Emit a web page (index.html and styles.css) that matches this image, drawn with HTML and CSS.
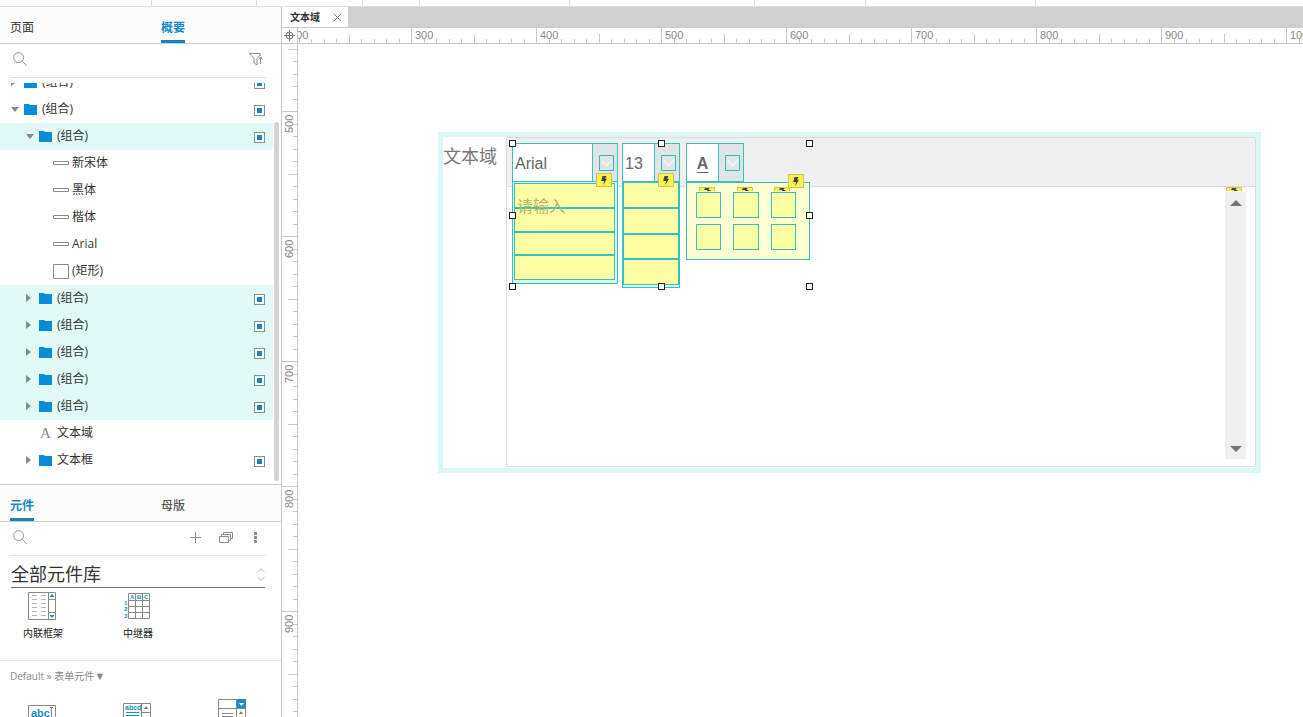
FILE: index.html
```html
<!DOCTYPE html>
<html lang="zh">
<head>
<meta charset="utf-8">
<title>文本域</title>
<link rel="stylesheet" href="styles.css">
</head>
<body>
<svg class="defs" aria-hidden="true">
  <symbol id="search" viewBox="0 0 16 16"><circle cx="6" cy="6" r="5.3"/><path d="M10 10l5 5"/></symbol>
  <symbol id="folder" viewBox="0 0 13 12"><path d="M0 1h5l1 1h7v10H0z"/></symbol>
  <symbol id="bar" viewBox="0 0 16 4"><path d="M.5.5h15v3H.5z"/></symbol>
  <symbol id="bolt" viewBox="0 0 16 14" preserveAspectRatio="xMidYMin slice"><path class="plate" d="M.5.5h15v13H.5z"/><path class="flash" d="M6.5 3h4L9.2 5.8H11L7.2 12 8 8H5.2z"/></symbol>
  <symbol id="boltcut" viewBox="0 0 16 4"><path class="plate" d="M.5.5h15v4H.5z"/><path class="flash" d="M6 1h4.500L9.500 3H12l-1 1H8V3H5z"/></symbol>
  <symbol id="chevron" viewBox="0 0 15 16"><path class="frame" d="M.5.5h14v15H.5z"/><path class="mark" d="M2.500 5.500l5 5 5-5"/></symbol>
</svg>
<div class="toolbar"><i></i><i></i><i></i><i></i><i></i><i></i><i></i><i></i></div>
<div class="workspace">
  <aside class="sidebar">
    <section class="outline">
      <nav class="tabs"><button>页面</button><button class="active">概要</button></nav>
      <div class="search">
        <svg class="line magnifier"><use href="#search"/></svg>
        <input type="text" aria-label="搜索概要">
        <button class="tool" aria-label="筛选"><svg class="line" width="14" height="13"><path d="M11 3V.5H.5L5 5.500V10l3 2V5.500L11 2M11.500 11V4M9.500 6.500l2-2.500 2 2.500"/></svg></button>
      </div>
      <div class="tree">
        <ul>
          <li class="l1"><span class="arrow"></span><svg class="folder"><use href="#folder"/></svg><label for="g0">(组合)</label><input type="checkbox" id="g0" checked></li>
          <li class="l1"><span class="arrow open"></span><svg class="folder"><use href="#folder"/></svg><label for="g1">(组合)</label><input type="checkbox" id="g1" checked></li>
          <li class="l2 picked"><span class="arrow open"></span><svg class="folder"><use href="#folder"/></svg><label for="g2">(组合)</label><input type="checkbox" id="g2" checked></li>
          <li class="l3"><svg class="line bar"><use href="#bar"/></svg><span>新宋体</span></li>
          <li class="l3"><svg class="line bar"><use href="#bar"/></svg><span>黑体</span></li>
          <li class="l3"><svg class="line bar"><use href="#bar"/></svg><span>楷体</span></li>
          <li class="l3"><svg class="line bar"><use href="#bar"/></svg><span>Arial</span></li>
          <li class="l3"><svg class="line rect"><path d="M.5.5h15v14H.5z"/></svg><span>(矩形)</span></li>
          <li class="l2 picked"><span class="arrow"></span><svg class="folder"><use href="#folder"/></svg><label for="g3">(组合)</label><input type="checkbox" id="g3" checked></li>
          <li class="l2 picked"><span class="arrow"></span><svg class="folder"><use href="#folder"/></svg><label for="g4">(组合)</label><input type="checkbox" id="g4" checked></li>
          <li class="l2 picked"><span class="arrow"></span><svg class="folder"><use href="#folder"/></svg><label for="g5">(组合)</label><input type="checkbox" id="g5" checked></li>
          <li class="l2 picked"><span class="arrow"></span><svg class="folder"><use href="#folder"/></svg><label for="g6">(组合)</label><input type="checkbox" id="g6" checked></li>
          <li class="l2 picked"><span class="arrow"></span><svg class="folder"><use href="#folder"/></svg><label for="g7">(组合)</label><input type="checkbox" id="g7" checked></li>
          <li class="l2"><span class="gap"></span><b class="glyph">A</b><span>文本域</span></li>
          <li class="l2"><span class="arrow"></span><svg class="folder"><use href="#folder"/></svg><label for="g8">文本框</label><input type="checkbox" id="g8" checked></li>
        </ul>
        <div class="thumb"></div>
      </div>
    </section>
    <section class="library">
      <nav class="tabs"><button class="active">元件</button><button>母版</button></nav>
      <div class="search">
        <svg class="line magnifier"><use href="#search"/></svg>
        <input type="text" aria-label="搜索元件">
        <button class="tool" aria-label="添加"><svg class="line" width="11" height="11"><path d="M5.500 0v11M0 5.500h11"/></svg></button>
        <button class="tool" aria-label="元件库"><svg class="line" width="14" height="11"><path d="M.5 4.500h9v6h-9zM2.500 4V2.500h9v6H10M4.500 2V.5h9v6H12"/></svg></button>
        <button class="tool" aria-label="更多"><svg class="dots" width="3" height="11"><path d="M0 0h3v3H0zM0 4h3v3H0zM0 8h3v3H0z"/></svg></button>
      </div>
      <div class="picker">
        <select aria-label="元件库"><option>全部元件库</option></select>
        <svg width="8" height="13"><path d="M.5 4L4 .7 7.500 4M.5 9L4 12.300 7.500 9"/></svg>
      </div>
      <div class="widgets first">
        <figure><svg class="w" width="28" height="28"><path d="M.5.5h27v27H.5zM20.500 0v28M20 7.500h8M20 20.500h8"/><path class="dash" d="M4 3.500h14M4 7.500h14M4 11.500h14M4 15.500h14M4 19.500h14M4 23.500h14"/><path class="blue" d="M21.500 5L24 2l2.500 3zM21.500 23L24 26l2.500-3z"/></svg><figcaption>内联框架</figcaption></figure>
        <figure><svg class="w" width="28" height="28"><path d="M5.500 1.500h21v25h-21zM5 8.500h22M5 14.500h22M5 20.500h22M12.500 1v26M19.500 1v26"/><g class="tiny"><text x="7" y="7">A</text><text x="14" y="7">B</text><text x="21" y="7">C</text><text x="1" y="13">1</text><text x="1" y="19">2</text><text x="1" y="26">3</text></g></svg><figcaption>中继器</figcaption></figure>
      </div>
      <h3>Default » 表单元件 <span>▼</span></h3>
      <div class="widgets second">
        <figure><svg class="w low" width="28" height="12"><path d="M.5 12V.5h27V12M22 2.500h3M23.500 2.500V12"/><text class="abc" x="3" y="12">abc</text></svg></figure>
        <figure><svg class="w mid" width="28" height="14"><path d="M.5 14V.5h27V14M18.500 0v14M18 9.500h10"/><path class="hot" d="M3 9.500h13M3 12.500h13"/><path class="ink" d="M21 6l2-3 2 3z"/><text class="abcd" x="2" y="7">abcd</text></svg></figure>
        <figure><svg class="w" width="28" height="18"><path d="M.5 18V.5h27V18M18.500 0v18M0 9.500h28M4 14.500h11M4 17.500h11"/><path class="blue" d="M19 0h9v9h-9z"/><path class="white" d="M21 4h5l-2.500 3z"/><path class="ink" d="M21 15l2-3 2 3z"/></svg></figure>
      </div>
    </section>
  </aside>
  <main class="editor">
    <div class="pages"><div class="page"><strong>文本域</strong><button aria-label="关闭"><svg width="7" height="7"><path d="M0 0l7 7M7 0L0 7"/></svg></button></div></div>
    <div class="rulers">
      <div class="corner"><svg width="11" height="11"><circle cx="5.500" cy="5.500" r="3.500"/><path d="M5.500 0v11M0 5.500h11"/></svg></div>
      <svg class="hruler">
        <defs><pattern id="ht" x="113" width="125" height="15" patternUnits="userSpaceOnUse"><path d="M.5 0v15M13.500 11v4M25.500 11v4M38.500 11v4M50.500 11v4M63.500 6v9M75.500 11v4M88.500 11v4M100.500 11v4M113.500 11v4"/></pattern></defs>
        <rect width="100%" height="15" fill="url(#ht)"/>
        <text x="-8" y="11">200</text><text x="117" y="11">300</text><text x="242" y="11">400</text><text x="367" y="11">500</text><text x="492" y="11">600</text><text x="617" y="11">700</text><text x="742" y="11">800</text><text x="867" y="11">900</text><text x="992" y="11">1000</text>
      </svg>
      <svg class="vruler">
        <defs><pattern id="vt" y="67" width="15" height="125" patternUnits="userSpaceOnUse"><path d="M0 .5h15M11 13.500h4M11 25.500h4M11 38.500h4M11 50.500h4M6 63.500h9M11 75.500h4M11 88.500h4M11 100.500h4M11 113.500h4"/></pattern></defs>
        <rect width="15" height="100%" fill="url(#vt)"/>
        <g transform="rotate(-90)"><text x="-89" y="11">500</text><text x="-214" y="11">600</text><text x="-339" y="11">700</text><text x="-464" y="11">800</text><text x="-589" y="11">900</text></g>
      </svg>
      <div class="canvas">
        <div class="group">
          <span class="caption">文本域</span>
          <div class="box"><div class="head"></div></div>
          <div class="scroll"><i class="up"></i><i class="down"></i></div>
        </div>
        <div class="combo font"><span>Arial</span><i><svg><use href="#chevron"/></svg></i></div>
        <div class="combo size"><span>13</span><i><svg><use href="#chevron"/></svg></i></div>
        <div class="combo color"><span><b>A</b></span><i><svg><use href="#chevron"/></svg></i></div>
        <div class="menu fonts"><div></div><div></div><div></div><div></div></div>
        <div class="menu sizes"><div></div><div></div><div></div><div></div></div>
        <span class="hint">请输入</span>
        <div class="palette"><i></i><i></i><i></i><i></i><i></i><i></i></div>
        <svg class="bolt b1"><use href="#bolt"/></svg><svg class="bolt b2"><use href="#bolt"/></svg><svg class="bolt b3"><use href="#bolt"/></svg>
        <svg class="bolt cut c1"><use href="#boltcut"/></svg><svg class="bolt cut c2"><use href="#boltcut"/></svg><svg class="bolt cut c3"><use href="#boltcut"/></svg><svg class="bolt cut c4"><use href="#boltcut"/></svg>
        <div class="handles"><i></i><i></i><i></i><i></i><i class="none"></i><i></i><i></i><i></i><i></i></div>
      </div>
    </div>
  </main>
</div>
</body>
</html>
```
FILE: styles.css
```css
* { box-sizing: border-box; }
html, body { height: 100%; }
body { margin: 0; display: flex; flex-direction: column; overflow: hidden; background: #fff; color: #333; font: 12px/16px "Open Sans", "Noto Sans CJK SC", sans-serif; }
button, input, select { font: inherit; color: inherit; border: 0; padding: 0; margin: 0; background: none; outline: 0; }
ul, figure, h3 { margin: 0; padding: 0; list-style: none; }
svg { display: block; flex: none; }
i { font-style: normal; }
.defs { position: absolute; width: 0; height: 0; }
.line { fill: none; stroke: #8c8c8c; }

.toolbar { flex: none; height: 7px; border-bottom: 1px solid #dedede; display: grid; grid-template-columns: 152px 105px 106px 57px 150px 185px 111px 170px; }
.toolbar i { border-right: 1px solid #dedede; }
.workspace { flex: 1; min-height: 0; display: flex; }

.sidebar { flex: none; width: 282px; border-right: 1px solid #c8c8c8; display: flex; flex-direction: column; overflow: hidden; }
.outline { flex: 1; min-height: 0; display: flex; flex-direction: column; }
.library { flex: none; height: 233px; border-top: 1px solid #ccc; overflow: hidden; }
.tabs { flex: none; height: 37px; display: grid; grid-template-columns: 151px 1fr; justify-items: start; padding-left: 10px; background: #fcfcfc; border-bottom: 1px solid #ccc; }
.tabs button { padding-top: 9px; border-bottom: 3px solid transparent; }
.tabs .active { color: #1487cc; font-weight: bold; border-color: #1a80c0; }
.search { flex: none; height: 34px; margin: 0 15px 0 10px; padding: 0 1px 2px 3px; display: flex; align-items: center; border-bottom: 1px solid #e2e2e2; }
.search input { flex: 1; min-width: 0; }
.magnifier { width: 15px; height: 15px; }
.tool { margin-left: 18px; }
.search .tool:last-child { margin-right: 2px; }
.library .tool:last-child { margin: 0 8px 0 21px; }
.dots { fill: #8c8c8c; }

.tree { flex: 1; min-height: 0; margin-top: 5px; position: relative; overflow: hidden; }
.tree ul { margin: -14px 8px 0 0; }
.tree li { height: 27px; display: flex; align-items: center; padding: 0 8px 1px 0; }
.tree .l1 { padding-left: 8px; }
.tree .l2 { padding-left: 23px; }
.tree .l3 { padding-left: 53px; }
.picked { background: #e1faf7; }
.arrow, .gap { width: 16px; flex: none; }
.arrow::before { content: ""; display: block; margin-left: 3px; width: 0; border: 4px solid transparent; border-left: 5px solid #888; border-right: 0; }
.arrow.open::before { border: 4px solid transparent; border-top: 5px solid #888; border-bottom: 0; }
.folder { width: 13px; height: 12px; fill: #078cda; }
.tree label, .tree li > span:last-child { margin-left: 5px; }
.tree .l3 > span:last-child { margin-left: 3px; }
.bar { width: 16px; height: 4px; }
.rect { width: 16px; height: 15px; }
.glyph { width: 13px; text-align: center; color: #888; font: 15px/16px "Liberation Serif", serif; }
.tree input { appearance: none; margin: 3px 0 0 auto; width: 11px; height: 11px; border: 1px solid #7f9299; background: #1a80c8; box-shadow: inset 0 0 0 2px #fff; }
.thumb { position: absolute; right: 2px; top: 39px; bottom: 3px; width: 5px; border-radius: 3px; background: #d3d3d3; }

.picker { margin: 0 16px 0 11px; height: 32px; border-bottom: 1px solid #777; display: flex; align-items: center; padding-top: 4px; }
.picker select { appearance: none; flex: 1; height: 26px; font-size: 18px; line-height: 26px; }
.picker svg { fill: none; stroke: #bbb; margin-top: 2px; }
.widgets { display: grid; grid-template-columns: 95px 95px 95px; padding-left: 10px; margin-right: -20px; }
.widgets figure { width: 64px; display: flex; flex-direction: column; align-items: center; gap: 6px; }
.first { height: 73px; padding-top: 4px; margin-right: 0; border-bottom: 1px solid #e2e2e2; }
figcaption { font-size: 10px; line-height: 14px; color: #222; white-space: nowrap; padding-left: 2px; }
h3 { font-size: 10px; line-height: 14px; font-weight: normal; color: #888; padding: 8px 10px 16px; }
h3 span { font: 8px "DejaVu Sans", sans-serif; vertical-align: 1px; }
.w { fill: none; stroke: #888; overflow: visible; }
.w .dash { stroke: #bbb; stroke-dasharray: 5 4; }
.w .blue { fill: #1a8cc0; stroke: none; }
.w .hot { stroke: #1a8cc0; }
.w .ink { fill: #777; stroke: none; }
.w .white { fill: #fff; stroke: none; }
.w text { fill: #1a8cc0; stroke: none; font: bold 11px "Liberation Sans", sans-serif; }
.w .tiny text { font-size: 6px; }
.w .abcd { font-size: 7px; }
.low { margin-top: 6px; }
.mid { margin-top: 4px; }

.editor { flex: 1; min-width: 0; display: flex; flex-direction: column; }
.pages { flex: none; height: 21px; background: #d0d0d0; display: flex; border-bottom: 1px solid #ccc; }
.page { width: 66px; background: #fff; display: flex; align-items: center; justify-content: space-between; padding: 0 7px 1px 8px; font-size: 10px; }
.page svg { stroke: #888; margin-top: 2px; }
.rulers { flex: 1; min-height: 0; display: grid; grid-template: 16px 1fr / 16px 1fr; }
.corner { border: solid #c8c8c8; border-width: 0 1px 1px 0; display: grid; place-items: center; }
.corner svg { fill: none; stroke: #777; }
.hruler { width: 100%; height: 16px; border-bottom: 1px solid #c8c8c8; overflow: hidden; }
.vruler { width: 16px; height: 100%; border-right: 1px solid #c8c8c8; overflow: hidden; }
.rulers pattern path { stroke: #c8c8c8; }
.rulers text { fill: #888; font: 11px "Liberation Sans", sans-serif; }

.canvas { position: relative; overflow: hidden; }
.group { position: absolute; left: 140px; top: 88px; width: 823px; height: 341px; border: 5px solid #dbf7f5; }
.caption { position: absolute; left: 0; top: 5px; font: 18px/26px "Noto Sans CJK SC", sans-serif; color: #777; }
.box { position: absolute; left: 63px; right: 0; top: 0; bottom: 1px; border: 1px solid #ddd; border-radius: 2px; }
.head { height: 49px; background: #f0f0f0; border-bottom: 1px solid #ddd; }
.scroll { position: absolute; right: 10px; top: 55px; width: 21px; height: 267px; background: #f0f0f0; display: flex; flex-direction: column; justify-content: space-between; align-items: center; padding: 8px 0 7px; }
.up, .down { border: 6px solid transparent; }
.up { border-top: 0; border-bottom-color: #777; }
.down { border-bottom: 0; border-top-color: #777; }
.combo { position: absolute; top: 99px; height: 39px; border: 1px solid #35c4ba; display: flex; background: #fff; color: #666; font: 16px/39px "Liberation Sans", sans-serif; }
.combo span { flex: 1; padding-left: 2px; }
.combo i { width: 25px; border-left: 1px solid #35c4ba; background: #dfe4e4; padding: 11px 0 0 6px; }
.combo i svg { width: 15px; height: 16px; fill: none; }
.frame { stroke: #35b8c4; }
.mark { stroke: #f3f3f3; stroke-width: 2; }
.font { left: 214px; width: 106px; }
.size { left: 324px; width: 58px; }
.color { left: 388px; width: 58px; }
.color span { text-align: center; padding: 0; }
.color b { text-decoration: underline; text-underline-offset: 3px; }
.menu { position: absolute; top: 137px; border: 1px solid #35c4ba; background: #d9faea; padding: 1px; display: grid; }
.menu div { background: #ffffa5; border: 1px solid #35c4ba; }
.fonts { left: 214px; width: 106px; height: 103px; padding-right: 2px; padding-bottom: 3px; grid-template-rows: 25px 24px 23px 25px; }
.sizes { left: 324px; width: 58px; height: 107px; padding: 0 0 2px; grid-template-rows: 26px 26px 25px 26px; }
.hint { position: absolute; left: 219px; top: 149px; font: 16px/24px "Noto Sans CJK SC", sans-serif; color: #b5b56c; }
.palette { position: absolute; left: 388px; top: 138px; width: 124px; height: 78px; border: 1px solid #35c4ba; background: #ffffd2; padding: 9px; display: grid; grid-template-columns: 25px 26px 25px; grid-auto-rows: 26px; gap: 6px 12px; }
.palette i { background: #ffffa5; border: 1px solid #35c4ba; }
.bolt { position: absolute; width: 16px; height: 14px; }
.plate { fill: #faf34b; stroke: #ccc650; }
.flash { fill: #444; }
.b1 { left: 298px; top: 129px; }
.b2 { left: 360px; top: 129px; }
.b3 { left: 490px; top: 130px; }
.cut { height: 4px; }
.c1 { left: 401px; top: 143px; }
.c2 { left: 439px; top: 143px; }
.c3 { left: 476px; top: 143px; }
.c4 { left: 928px; top: 143px; }
.handles { position: absolute; left: 211px; top: 96px; width: 304px; height: 150px; display: grid; grid-template-columns: 7px 7px 7px; grid-template-rows: 7px 7px 7px; justify-content: space-between; align-content: space-between; }
.handles i { background: #fff; border: 1px solid #222; }
.handles .none { visibility: hidden; }
```
